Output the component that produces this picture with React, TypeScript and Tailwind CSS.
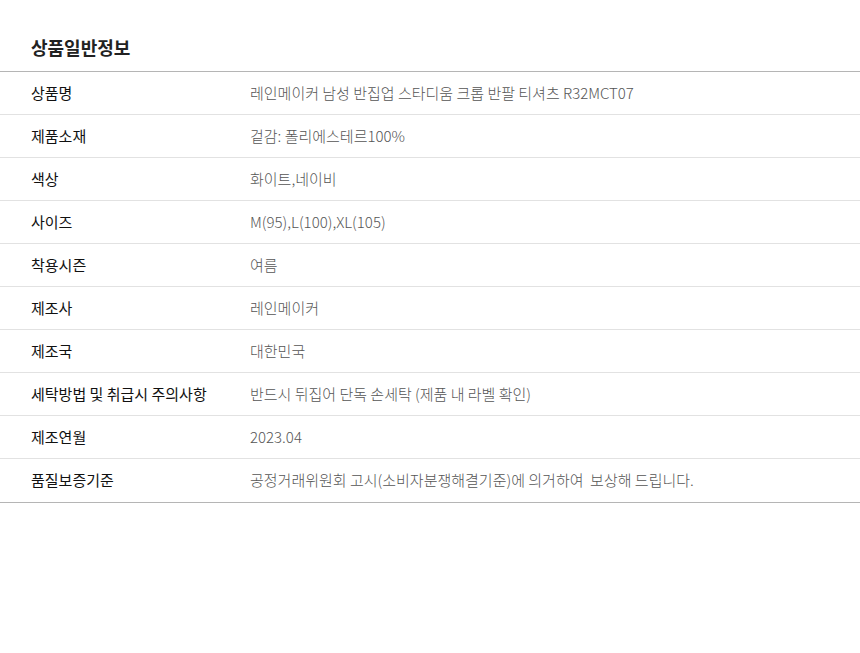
const rows: [string, string][] = [
  ["상품명", "레인메이커 남성 반집업 스타디움 크롭 반팔 티셔츠 R32MCT07"],
  ["제품소재", "겉감: 폴리에스테르100%"],
  ["색상", "화이트,네이비"],
  ["사이즈", "M(95),L(100),XL(105)"],
  ["착용시즌", "여름"],
  ["제조사", "레인메이커"],
  ["제조국", "대한민국"],
  ["세탁방법 및 취급시 주의사항", "반드시 뒤집어 단독 손세탁 (제품 내 라벨 확인)"],
  ["제조연월", "2023.04"],
  ["품질보증기준", "공정거래위원회 고시(소비자분쟁해결기준)에 의거하여  보상해 드립니다."],
];

export default function App() {
  return (
    <div className="min-h-[653px] w-[860px] bg-white font-['Noto_Sans_CJK_KR','Noto_Sans',sans-serif]">
      <h2 className="px-[31px] pt-[35px] pb-[12px] text-[18px] leading-[24px] font-bold text-[#222]">
        상품일반정보
      </h2>
      <div className="border-t border-b border-[#b5b5b5]">
        {rows.map(([label, value], i) => (
          <div
            key={label}
            className={`flex items-center ${
              i === 0 ? "h-[42px]" : i === rows.length - 1 ? "h-[44px] border-t border-[#e2e2e2]" : "h-[43px] border-t border-[#e2e2e2]"
            }`}
          >
            <div className="w-[250px] shrink-0 pl-[31px] text-[15px] font-normal text-[#111]">{label}</div>
            <div className="whitespace-pre text-[15px] font-light text-[#555]">{value}</div>
          </div>
        ))}
      </div>
    </div>
  );
}
